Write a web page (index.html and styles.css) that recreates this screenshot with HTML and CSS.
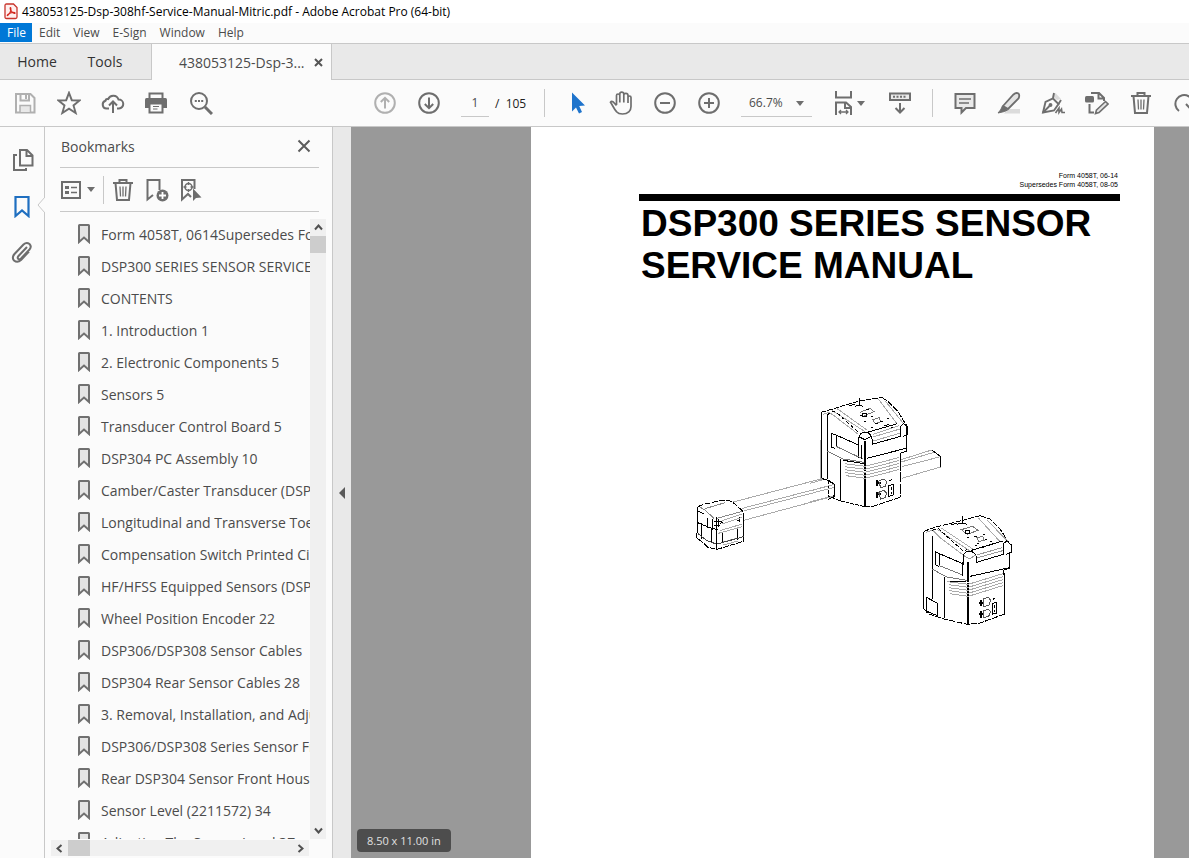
FILE: index.html
```html
<!DOCTYPE html>
<html lang="en">
<head>
    <meta charset="UTF-8">
    <meta name="viewport" content="width=device-width, initial-scale=1.0">
    <title>438053125-Dsp-308hf-Service-Manual-Mitric.pdf - Adobe Acrobat Pro (64-bit)</title>
    <link rel="stylesheet" href="styles.css">
</head>
<body>
    <!-- shared icons -->
    <svg class="symbols" aria-hidden="true">
        <symbol id="mark" viewBox="0 0 12 20">
            <path d="M1 1.500Q1 1 1.500 1H10.500Q11 1 11 1.500V18L6 13.500L1 18Z" fill="#e4e4e4" stroke="#707070" stroke-width="2"/>
        </symbol>
        <symbol id="trash" viewBox="0 0 24 24">
            <path d="M2 5H22M8.500 5V2H15.500V5M4.500 5L6 22H18L19.500 5" fill="none" stroke="#6e6e6e" stroke-width="2"/>
            <path d="M9 8.500L9.500 18.500M12 8.500V18.500M15 8.500L14.500 18.500" fill="none" stroke="#6e6e6e" stroke-width="1.300"/>
        </symbol>
    </svg>

    <header class="titlebar">
        <svg width="14" height="17" viewBox="0 0 14 17">
            <path d="M1 2.500Q1 1 2.500 1H9.500L13 4.500V14Q13 15.500 11.500 15.500H2.500Q1 15.500 1 14Z" fill="#fff0ef" stroke="#c8332b" stroke-width="1.300"/>
            <path d="M3.500 12.500C5.500 11.500 7.500 7 6.800 5C6.300 3.800 5.600 5.500 7 7.500C8.200 9.400 10 11 11 10.300C11.500 9 7 9.200 4.500 11C3.200 11.800 3 12.800 3.500 12.500Z" fill="none" stroke="#d3261d" stroke-width="1.200"/>
        </svg>
        <span>438053125-Dsp-308hf-Service-Manual-Mitric.pdf - Adobe Acrobat Pro (64-bit)</span>
    </header>

    <nav class="menubar">
        <button class="active">File</button>
        <button>Edit</button>
        <button>View</button>
        <button>E-Sign</button>
        <button>Window</button>
        <button>Help</button>
    </nav>

    <div class="tabs">
        <button class="tab home">Home</button>
        <button class="tab tools">Tools</button>
        <div class="doc-tab">
            <span>438053125-Dsp-3...</span>
            <button aria-label="Close tab">
                <svg width="9" height="9" viewBox="0 0 9 9"><path d="M1 1L8 8M8 1L1 8" stroke="#555" stroke-width="2"/></svg>
            </button>
        </div>
    </div>

    <div class="toolbar">
        <div class="group">
            <button class="tool" aria-label="Save">
                <svg class="icon" viewBox="0 0 24 24" fill="none" stroke="#b0b0b0" stroke-width="2">
                    <path d="M3 3H17.500L21.500 7V21.500H3Z"/><path d="M7.500 3V9.500H16V3M13 4V8"/><path d="M7 21V14.500H17.500V21" fill="#e8e8e8" stroke-width="1.500"/>
                </svg>
            </button>
            <button class="tool" aria-label="Star">
                <svg class="icon" viewBox="0 0 24 24" fill="none" stroke="#6e6e6e" stroke-width="1.900">
                    <path d="M12 1.800L14.800 9.200L22.600 9.500L16.500 14.400L18.700 22L12 17.600L5.300 22L7.500 14.400L1.400 9.500L9.200 9.200Z"/>
                </svg>
            </button>
            <button class="tool" aria-label="Upload">
                <svg class="icon" viewBox="0 0 24 24" fill="none" stroke="#6e6e6e" stroke-width="2">
                    <path d="M8 17.500H5.500A4 4 0 0 1 4.500 9.700Q5 7.500 7.200 8A5.500 5.500 0 0 1 17.500 8.500A4.500 4.500 0 0 1 18 17.500H16"/><path d="M12 22V11M8 14.500L12 10.500L16 14.500"/>
                </svg>
            </button>
            <button class="tool" aria-label="Print">
                <svg class="icon" viewBox="0 0 24 24" fill="none" stroke="#6e6e6e" stroke-width="2">
                    <path d="M4.500 7V2.500H17.500V7"/><path d="M0 8.500Q0 7 1.500 7H20.500Q22 7 22 8.500V17H0Z" fill="#6e6e6e" stroke="none"/><path d="M4.500 12.500H17.500V21.500H4.500Z" fill="#fbfbfb"/><path d="M8 15.500H14M8 18H12.500" stroke-width="1"/>
                </svg>
            </button>
            <button class="tool" aria-label="Search">
                <svg class="icon" viewBox="0 0 24 24" fill="none" stroke="#6e6e6e" stroke-width="2">
                    <circle cx="10" cy="10" r="8"/><path d="M16 16L23 23" stroke-width="3"/><path d="M5.800 10H7.800M9 10H11M12.200 10H14.200"/>
                </svg>
            </button>
        </div>

        <div class="group pages">
            <button class="tool" aria-label="Previous page">
                <svg class="icon" viewBox="0 0 24 24" fill="none" stroke="#b0b0b0" stroke-width="2"><circle cx="12" cy="12" r="9.800"/><path d="M12 17.500V7M7.800 11L12 6.800L16.200 11"/></svg>
            </button>
            <button class="tool" aria-label="Next page">
                <svg class="icon" viewBox="0 0 24 24" fill="none" stroke="#6e6e6e" stroke-width="2"><circle cx="12" cy="12" r="9.800"/><path d="M12 6.500V17M7.800 13L12 17.200L16.200 13"/></svg>
            </button>
            <input class="page-no" type="text" value="1" aria-label="Page">
            <span class="total">/&nbsp; 105</span>
        </div>

        <div class="group split">
            <button class="tool" aria-label="Select">
                <svg class="icon" viewBox="0 0 24 24"><path d="M7 1.500V20.500L11 16.500L14 22.500L17 21L14.200 15L20 14.500Z" fill="#1f74cc"/></svg>
            </button>
            <button class="tool" aria-label="Hand">
                <svg class="icon" viewBox="0 0 24 24" fill="none" stroke="#6e6e6e" stroke-width="1.700">
                    <path d="M7.500 14.500L4.200 11Q2.500 9.800 1.500 11.200C3.500 14 5 18 7.500 20.700Q9.500 23 13.500 23C19 23 22 20 22 15.500V6.500Q22 5 20.500 5Q19 5 19 6.500M7.500 14V4.500Q7.500 3 9 3Q10.800 3 10.800 4.500V11.500V3Q10.800 1.200 12.700 1.200Q14.800 1.200 14.800 3V11.500V4Q14.800 2.400 16.800 2.400Q19 2.400 19 4.500V12"/>
                </svg>
            </button>
            <button class="tool" aria-label="Zoom out">
                <svg class="icon" viewBox="0 0 24 24" fill="none" stroke="#6e6e6e" stroke-width="2"><circle cx="12" cy="12" r="9.800"/><path d="M7 12H17"/></svg>
            </button>
            <button class="tool" aria-label="Zoom in">
                <svg class="icon" viewBox="0 0 24 24" fill="none" stroke="#6e6e6e" stroke-width="2"><circle cx="12" cy="12" r="9.800"/><path d="M7 12H17M12 7V17"/></svg>
            </button>
            <label class="zoom">
                <select aria-label="Zoom level">
                    <option>66.7%</option>
                    <option>100%</option>
                </select>
            </label>
            <button class="tool fit" aria-label="Fit width">
                <svg class="icon" viewBox="0 0 24 24" fill="none" stroke="#6e6e6e" stroke-width="2">
                    <path d="M3 0V6.500H18V0M3 24V11.500H13L18 16V24M12 11.500V17H18"/><path d="M6 21H15M8 19L6 21L8 23M13 19L15 21L13 23" stroke-width="1.300"/>
                </svg>
                <span class="caret"></span>
            </button>
            <button class="tool scroll" aria-label="Scrolling">
                <svg class="icon" viewBox="0 0 24 24" fill="none" stroke="#6e6e6e" stroke-width="2">
                    <path d="M2 2.500H22V9H2Z" fill="#e9e9e9"/><path d="M5 5.800H7M8.500 5.800H10.500M12 5.800H14M15.500 5.800H17.500"/><path d="M12 12V21.500M7.500 17L12 21.500L16.500 17"/>
                </svg>
            </button>
        </div>

        <div class="group split">
            <button class="tool" aria-label="Comment">
                <svg class="icon" viewBox="0 0 24 24" fill="#e9e9e9" stroke="#6e6e6e" stroke-width="2">
                    <path d="M2.500 3H21.500V17H13L8.500 21.500V17H2.500Z"/><path d="M6 8H18M6 12H16" stroke-width="1.300"/>
                </svg>
            </button>
            <button class="tool" aria-label="Highlight">
                <svg class="icon" viewBox="0 0 24 24" fill="#e4e4e4" stroke="#6e6e6e" stroke-width="1.800">
                    <path d="M11 18H23V22.500H7Z" fill="#dcdcdc" stroke="none"/><path d="M6 15L16.500 3.500Q19 1.200 21.500 2.500Q23 4.500 21.500 7.500L11 18Z"/><path d="M5.500 15L10.500 19L7.500 20.500L1 22L3.500 19Z" fill="#6e6e6e" stroke-width="1"/>
                </svg>
            </button>
            <button class="tool" aria-label="Sign">
                <svg class="icon" viewBox="0 0 24 24" fill="none" stroke="#6e6e6e" stroke-width="1.900">
                    <path d="M14.500 2L20 8L16 9L11.500 5Z" fill="#dcdcdc" stroke="none"/><path d="M2 21.500L4.500 11L12 7.500L17.500 13L13 19.500Z"/><path d="M2 21.500L8.500 15M13 2L12 7M17.500 13L20 9"/><circle cx="9.500" cy="14" r="1"/><path d="M14.500 22L18 17V21.500L20.500 18L21 21.500H24" stroke-width="1.600"/>
                </svg>
            </button>
            <button class="tool" aria-label="Edit PDF">
                <svg class="icon" viewBox="0 0 24 24" fill="none" stroke="#6e6e6e" stroke-width="2">
                    <path d="M6 2H14L19 7V10M13.500 2V7.500H19M4.500 13V21.500H9"/><rect x="0" y="5" width="9" height="6.500" rx="1.500" fill="#6e6e6e" stroke="none"/><path d="M11.500 19L20.500 10.500L23 13L14 21.500L10.500 22.500Z" fill="#e4e4e4" stroke-width="1.600"/>
                </svg>
            </button>
            <button class="tool" aria-label="Delete"><svg class="icon"><use href="#trash"/></svg></button>
            <button class="tool" aria-label="Rotate">
                <svg class="icon" viewBox="0 0 24 24" fill="none" stroke="#6e6e6e" stroke-width="2"><path d="M6 20A8.800 8.800 0 1 1 19 17M13 13L18 18.500L23 13"/></svg>
            </button>
        </div>
    </div>

    <main class="workspace">
        <nav class="rail">
            <button aria-label="Page thumbnails">
                <svg class="icon" viewBox="0 0 24 24" fill="none" stroke="#6e6e6e" stroke-width="2">
                    <path d="M9 2H16L21.500 7.500V17.500H9ZM15.500 2V8H21.500M6 7H3V22H15V20"/>
                </svg>
            </button>
            <button class="current" aria-label="Bookmarks">
                <svg class="icon" viewBox="0 0 24 24"><path d="M4.500 3H17.500V22L11 16.500L4.500 22Z" fill="none" stroke="#1f6fc0" stroke-width="2.200"/></svg>
            </button>
            <button aria-label="Attachments">
                <svg class="icon" viewBox="0 0 24 24" fill="none" stroke="#6e6e6e" stroke-width="2">
                    <path d="M16 7L7.500 16Q6 17.800 7.300 19Q8.500 19.800 10 18.500L18.500 9.500Q21 6.500 18.500 4Q15.500 1.700 12.500 4.500L3.500 14Q0.500 17.500 3 20.500Q6.500 23.300 10 20L18 11.500"/>
                </svg>
            </button>
            <svg class="notch" width="8" height="16" viewBox="0 0 8 16"><path d="M8 0L1 8L8 16" fill="#fbfbfb" stroke="#c8c8c8"/></svg>
        </nav>

        <aside class="panel">
            <div class="panel-head">
                <h2>Bookmarks</h2>
                <button aria-label="Close panel">
                    <svg width="14" height="14" viewBox="0 0 14 14"><path d="M1.500 1.500L12.500 12.500M12.500 1.500L1.500 12.500" stroke="#5c5c5c" stroke-width="2"/></svg>
                </button>
            </div>
            <div class="panel-tools">
                <button class="options" aria-label="Options">
                    <svg width="20" height="18" viewBox="0 0 20 18" fill="none" stroke="#6e6e6e" stroke-width="2"><path d="M1 1H19V17H1Z"/><path d="M4 6.500H8M4 11.500H8" stroke-width="3"/><path d="M10 6.500H16M10 11.500H16" stroke-width="1.600"/></svg>
                    <span class="caret"></span>
                </button>
                <button class="first" aria-label="Delete bookmark"><svg class="icon"><use href="#trash"/></svg></button>
                <button aria-label="New bookmark">
                    <svg class="icon" viewBox="0 0 24 24"><path d="M8 17L2.500 21.500V2H14.500V12" fill="none" stroke="#6e6e6e" stroke-width="2"/><circle cx="17.500" cy="17.500" r="6" fill="#6e6e6e"/><path d="M14 17.500H21M17.500 14V21" stroke="#fff" stroke-width="1.800"/></svg>
                </button>
                <button aria-label="Find bookmark">
                    <svg class="icon" viewBox="0 0 24 24" fill="none" stroke="#6e6e6e" stroke-width="2"><path d="M15.500 11V2H3V21.500L9 16L12 19"/><circle cx="9.500" cy="9" r="3.500" stroke-width="1.500"/><path d="M9.500 4V7M9.500 11V14M4.500 9H7.500M11.500 9H14.500" stroke-width="1.300"/><path d="M14 10.500V23L17 20L22.500 19.500Z" fill="#6e6e6e" stroke="none"/></svg>
                </button>
            </div>
            <div class="list-area">
                <ul class="bookmarks">
                    <li><a href="#"><svg><use href="#mark"/></svg>Form 4058T, 0614Supersedes Form 4058T, 0805</a></li>
                    <li><a href="#"><svg><use href="#mark"/></svg>DSP300 SERIES SENSOR SERVICE MANUAL</a></li>
                    <li><a href="#"><svg><use href="#mark"/></svg>CONTENTS</a></li>
                    <li><a href="#"><svg><use href="#mark"/></svg>1. Introduction 1</a></li>
                    <li><a href="#"><svg><use href="#mark"/></svg>2. Electronic Components 5</a></li>
                    <li><a href="#"><svg><use href="#mark"/></svg>Sensors 5</a></li>
                    <li><a href="#"><svg><use href="#mark"/></svg>Transducer Control Board 5</a></li>
                    <li><a href="#"><svg><use href="#mark"/></svg>DSP304 PC Assembly 10</a></li>
                    <li><a href="#"><svg><use href="#mark"/></svg>Camber/Caster Transducer (DSP</a></li>
                    <li><a href="#"><svg><use href="#mark"/></svg>Longitudinal and Transverse Toe</a></li>
                    <li><a href="#"><svg><use href="#mark"/></svg>Compensation Switch Printed Circuit</a></li>
                    <li><a href="#"><svg><use href="#mark"/></svg>HF/HFSS Equipped Sensors (DSP</a></li>
                    <li><a href="#"><svg><use href="#mark"/></svg>Wheel Position Encoder 22</a></li>
                    <li><a href="#"><svg><use href="#mark"/></svg>DSP306/DSP308 Sensor Cables</a></li>
                    <li><a href="#"><svg><use href="#mark"/></svg>DSP304 Rear Sensor Cables 28</a></li>
                    <li><a href="#"><svg><use href="#mark"/></svg>3. Removal, Installation, and Adjustment</a></li>
                    <li><a href="#"><svg><use href="#mark"/></svg>DSP306/DSP308 Series Sensor Front</a></li>
                    <li><a href="#"><svg><use href="#mark"/></svg>Rear DSP304 Sensor Front Housing</a></li>
                    <li><a href="#"><svg><use href="#mark"/></svg>Sensor Level (2211572) 34</a></li>
                    <li><a href="#"><svg><use href="#mark"/></svg>Adjusting The Sensor Level 37</a></li>
                </ul>
                <div class="vscroll">
                    <button aria-label="Scroll up"><svg width="9" height="7" viewBox="0 0 9 7"><path d="M1 5.500L4.500 1.500L8 5.500" fill="none" stroke="#505050" stroke-width="2"/></svg></button>
                    <div class="thumb"></div>
                    <button aria-label="Scroll down"><svg width="9" height="7" viewBox="0 0 9 7"><path d="M1 1.500L4.500 5.500L8 1.500" fill="none" stroke="#505050" stroke-width="2"/></svg></button>
                </div>
            </div>
            <div class="hscroll">
                <button aria-label="Scroll left"><svg width="7" height="9" viewBox="0 0 7 9"><path d="M5.500 1L1.500 4.500L5.500 8" fill="none" stroke="#505050" stroke-width="2"/></svg></button>
                <div class="thumb"></div>
                <button aria-label="Scroll right"><svg width="7" height="9" viewBox="0 0 7 9"><path d="M1.500 1L5.500 4.500L1.500 8" fill="none" stroke="#505050" stroke-width="2"/></svg></button>
            </div>
        </aside>

        <button class="splitter" aria-label="Collapse panel">
            <svg width="6" height="12" viewBox="0 0 6 12"><path d="M6 0V12L0 6Z" fill="#5a5a5a"/></svg>
        </button>

        <section class="viewer">
            <article class="page">
                <p class="form-no">Form 4058T, 06-14<br>Supersedes Form 4058T, 08-05</p>
                <h1>DSP300 SERIES SENSOR SERVICE MANUAL</h1>
                <svg class="drawing" viewBox="0 0 1020 750" fill="none" stroke="#000" stroke-width="3" shape-rendering="crispEdges">
                    <!-- main sensor with its rail -->
                    <g transform="translate(360 0)">
                        <path d="M270 225L365 195M275 245L392 215M275 280L392 246M270 232L372 202M45 282L0 295M73 298L0 318M73 332L0 350" stroke="#aaa"/>
                        <path d="M365 195L392 215V246M45 282L73 298V332L64 336"/>
                        <path d="M33 85V280M52 90V282"/>
                        <path d="M33 82L75 70L100 62L150 48L215 37" stroke-dasharray="16 4"/>
                        <path d="M215 37L232 48L264 80L290 122" stroke-dasharray="18 4"/>
                        <path d="M38 88L58 82L72 92L145 148M66 76L165 140M80 70L172 136M205 42L262 118M226 48L284 120" stroke="#aaa"/>
                        <path d="M52 90L60 84L75 78L145 142" stroke-dasharray="10 8"/>
                        <path d="M146 182V158Q150 142 166 142Q184 144 186 162V180M148 156L165 164L184 154"/>
                        <path d="M188 148L268 122M188 156L270 132M190 168L272 144" stroke="#aaa"/>
                        <path d="M186 178L272 154M172 142L262 116M272 152V124L280 116L292 126V148L280 154"/>
                        <path d="M290 124V198L270 205V228"/>
                        <path d="M64 145V186L74 190M64 145L78 150V184M78 150L146 180V218"/>
                        <path d="M78 184L146 216L158 220M52 198L100 222L162 232" stroke="#777"/>
                        <path d="M154 180V222"/>
                        <path d="M165 168V362" stroke-width="6"/>
                        <path d="M160 244H171M160 258H171M160 270H171" stroke="#fff"/>
                        <path d="M92 222V348M100 226L162 236M170 220L288 190"/>
                        <path d="M270 228V335" stroke-dasharray="30 4"/>
                        <path d="M104 236L165 244L266 218M104 245L165 253L266 227M104 254L165 262L266 236M106 263L165 271L266 245M108 272L165 280L266 254" stroke="#aaa"/>
                        <path d="M55 284V334L92 348L160 364" stroke-dasharray="12 3"/>
                        <path d="M160 364L182 366L232 350L272 336" stroke-dasharray="20 4"/>
                        <path d="M148 64V40M136 64L146 60L160 64M118 62L134 58"/>
                        <path d="M150 82L180 70L192 80L162 92M188 104L208 98L212 110L196 116Z" stroke="#777"/>
                        <path d="M156 84H168V94H156ZM168 74H178M150 92H156M182 94H190M196 116H204M210 110H218M182 126H190M206 130H214M222 122H230M232 118H238M244 128H250M162 108H168M230 100H236"/>
                        <path d="M202 286V304M202 320V338M200 294H212M200 328H212" stroke-width="6"/>
                        <path d="M206 288L222 282L230 290L226 304L212 308ZM206 322L222 316L230 324L226 338L212 342Z" stroke="#555"/>
                        <path d="M236 302L250 298V330L236 334ZM238 288L246 284M243 306V314M243 320V326"/>
                    </g>
                    <!-- small sensor on the end of the rail -->
                    <g transform="translate(-15 165)">
                        <path d="M145 186L415 115M172 205L445 134M176 213L448 142M176 241L448 168" stroke="#aaa"/>
                        <path d="M412 116L432 122L448 133V170L430 178"/>
                        <path d="M407 0L408 116" stroke="#aaa"/>
                        <path d="M38 200L60 192L116 180L140 184L174 214V236" stroke-dasharray="18 4"/>
                        <path d="M44 200L62 212L88 236M60 206L120 188M92 236L172 214" stroke="#888"/>
                        <path d="M38 200V280M38 212L58 222M48 250V298M38 248L82 266L98 268"/>
                        <path d="M82 238V270M94 232V328M100 236V262M174 236V290M112 276V308M156 262V300M78 268V306M68 234V264"/>
                        <path d="M88 244H110M88 256H104M106 250L114 246M156 240H166M164 232V246"/>
                        <path d="M112 242L172 222M112 252L172 232M104 272L172 252M100 280L172 260M114 306L158 294M114 315L160 303" stroke="#aaa"/>
                        <path d="M34 280V292L58 312L68 322L96 328L176 304V290" stroke-dasharray="18 3"/>
                        <path d="M38 280L66 302L94 312M96 312L176 290" stroke="#444"/>
                    </g>
                    <!-- second sensor -->
                    <g transform="translate(660 360)">
                        <path d="M41 80V310M66 92V282"/>
                        <path d="M41 80L60 72L85 64L150 48L210 32" stroke-dasharray="16 4"/>
                        <path d="M210 32L240 42L270 72L296 112" stroke-dasharray="18 4"/>
                        <path d="M48 82L68 76L88 96L160 150M80 72L180 138M92 68L188 132M206 40L272 112M232 46L292 108" stroke="#aaa"/>
                        <path d="M66 76L84 70L160 138L172 134" stroke-dasharray="12 6"/>
                        <path d="M184 136L278 108M160 180V152Q164 138 180 138Q198 142 200 162V174"/>
                        <path d="M162 152L178 162L198 150M200 150L276 128M200 159L278 137" stroke="#999"/>
                        <path d="M200 172L280 148V116L290 108L304 120V142L288 148M298 148V190L280 196V210"/>
                        <path d="M75 140V178L86 184M75 140L88 146V182M88 146L158 176V212"/>
                        <path d="M88 182L158 210M66 192L110 216L170 226" stroke="#777"/>
                        <path d="M156 172V212"/>
                        <path d="M175 170V358" stroke-width="6"/>
                        <path d="M170 232H181" stroke="#fff"/>
                        <path d="M103 216V340M118 228L168 230M180 214L298 188M282 204V330"/>
                        <path d="M112 230L175 238L278 206M116 239L175 247L278 215M116 248L175 256L278 224M118 257L175 265L278 233M120 266L175 274L278 242" stroke="#aaa"/>
                        <path d="M48 276L66 286L82 294V332L48 318Z"/>
                        <path d="M41 310L54 326L102 342L172 358L210 354L282 328" stroke-dasharray="18 4"/>
                        <path d="M158 58V32M142 58L152 54L172 58M124 60L140 54"/>
                        <path d="M154 74L188 64L204 76L172 88ZM200 98L218 94L222 106L206 110Z" stroke="#777"/>
                        <path d="M166 76H178V86H166ZM170 98H176M192 94H200M202 114H208M220 88H226M194 122H200M226 104H232M240 110H246M216 126H222M232 120H240"/>
                        <path d="M212 286V304M212 318V338M208 294H220M208 328H220" stroke-width="6"/>
                        <path d="M220 282L234 276L242 286L236 302L222 304ZM220 318L234 312L242 320L236 334L222 338Z" stroke="#555"/>
                        <path d="M246 296L260 292V324L246 328ZM248 284L256 278M252 300V308M252 314V320"/>
                    </g>
                </svg>
            </article>
            <div class="page-size">8.50 x 11.00 in</div>
        </section>
    </main>
</body>
</html>
```

FILE: styles.css
```css
* {
    box-sizing: border-box;
}
body {
    margin: 0;
    height: 100vh;
    display: flex;
    flex-direction: column;
    overflow: hidden;
    background-color: #fbfbfb;
    color: #4b4b4b;
    font-family: "Open Sans", "Noto Sans", sans-serif;
    font-size: 12px;
}
button, input, select {
    font-family: inherit;
    font-size: inherit;
    color: inherit;
    background: none;
    border: none;
    padding: 0;
}
button {
    display: flex;
    align-items: center;
    justify-content: center;
}
.symbols {
    display: none;
}
.icon {
    width: 24px;
    height: 24px;
    flex: none;
}
.caret {
    border: 4px solid transparent;
    border-top: 5px solid #6e6e6e;
    border-bottom: none;
}

/* title and menu */
.titlebar {
    display: flex;
    align-items: center;
    gap: 4px;
    height: 23px;
    padding-left: 4px;
    background-color: #fff;
    color: #000;
    white-space: nowrap;
    flex: none;
}
.menubar {
    display: flex;
    height: 20px;
    padding-bottom: 1px;
    flex: none;
}
.menubar button {
    padding: 0 6px 0 7px;
}
.menubar .active {
    background-color: #0078d7;
    color: #fff;
}

/* tabs */
.tabs {
    display: flex;
    height: 37px;
    background-color: #e9e9e9;
    border-top: 1px solid #c8c8c8;
    border-bottom: 1px solid #c8c8c8;
    font-size: 14px;
    flex: none;
}
.tab {
    color: #333;
}
.home {
    width: 74px;
}
.tools {
    width: 62px;
}
.doc-tab {
    display: flex;
    align-items: center;
    justify-content: space-between;
    width: 181px;
    margin: 0 0 -1px 15px;
    padding: 0 8px 0 27px;
    background-color: #fbfbfb;
    border: 1px solid #c8c8c8;
    border-width: 0 1px;
}

/* toolbar */
.toolbar {
    display: flex;
    align-items: center;
    height: 47px;
    padding-left: 3px;
    border-bottom: 1px solid #c8c8c8;
    overflow: hidden;
    flex: none;
}
.group {
    display: flex;
    align-items: center;
    flex: none;
}
.tool {
    width: 44px;
    height: 44px;
    flex: none;
}
.pages {
    margin-left: 140px;
}
.page-no {
    width: 28px;
    height: 28px;
    margin-left: 10px;
    border-bottom: 1px solid #c8c8c8;
    text-align: center;
}
.total {
    width: 55px;
    padding-left: 6px;
    color: #222;
}
.split {
    position: relative;
    padding-left: 11px;
}
.split::before {
    content: "";
    position: absolute;
    left: 0;
    width: 1px;
    height: 28px;
    background-color: #c8c8c8;
}
.zoom {
    position: relative;
    margin-left: 10px;
    border-bottom: 1px solid #c8c8c8;
}
.zoom select {
    appearance: none;
    width: 71px;
    height: 27px;
    padding-left: 8px;
}
.zoom::after {
    content: "";
    position: absolute;
    right: 8px;
    top: 12px;
    border: 4px solid transparent;
    border-top: 5px solid #6e6e6e;
    border-bottom: none;
}
.fit {
    margin-left: 15px;
}
.scroll {
    margin: 0 10px 0 7px;
}

/* workspace */
.workspace {
    display: flex;
    flex: 1;
    min-height: 0;
}
.rail {
    position: relative;
    display: flex;
    flex-direction: column;
    align-items: center;
    gap: 22px;
    width: 45px;
    padding: 21px 0 0 2px;
    border-right: 1px solid #c8c8c8;
    flex: none;
}
.notch {
    position: absolute;
    right: -1px;
    top: 70px;
}
.panel {
    display: flex;
    flex-direction: column;
    width: 288px;
    border-right: 1px solid #c8c8c8;
    flex: none;
}
.panel-head {
    display: flex;
    align-items: center;
    justify-content: space-between;
    height: 41px;
    margin: 0 13px 0 15px;
    padding: 0 8px 2px 1px;
    border-bottom: 1px solid #c8c8c8;
    flex: none;
}
.panel-head h2 {
    margin: 0;
    font-size: 14px;
    font-weight: normal;
}
.panel-tools {
    display: flex;
    align-items: center;
    gap: 10px;
    height: 44px;
    margin: 0 13px 0 15px;
    border-bottom: 1px solid #c8c8c8;
    flex: none;
}
.options {
    gap: 6px;
    height: 28px;
    padding: 0 8px 0 1px;
    border-right: 1px solid #c8c8c8;
}
.first {
    margin-left: -3px;
}
.list-area {
    display: flex;
    flex: 1;
    min-height: 0;
    margin: 7px 6px 0 6px;
}
.bookmarks {
    flex: 1;
    margin: 0;
    padding: 0 0 0 27px;
    list-style: none;
    overflow: hidden;
}
.bookmarks a {
    display: flex;
    align-items: center;
    gap: 11px;
    height: 32px;
    padding-bottom: 2px;
    color: #4b4b4b;
    font-size: 14px;
    text-decoration: none;
    white-space: nowrap;
}
.bookmarks svg {
    width: 12px;
    height: 20px;
    flex: none;
}
.vscroll {
    display: flex;
    flex-direction: column;
    width: 16px;
    background-color: #f0f0f0;
}
.vscroll button {
    height: 17px;
}
.vscroll .thumb {
    height: 17px;
    margin-bottom: auto;
    background-color: #cdcdcd;
}
.hscroll {
    display: flex;
    height: 16px;
    margin: 1px 23px 2px 6px;
    background-color: #f0f0f0;
    flex: none;
}
.hscroll button {
    width: 17px;
}
.hscroll .thumb {
    width: 22px;
    margin-right: auto;
    background-color: #cdcdcd;
}
.splitter {
    width: 18px;
    background-color: #e9e9e9;
    flex: none;
}

/* document */
.viewer {
    position: relative;
    display: flex;
    justify-content: flex-end;
    flex: 1;
    padding-right: 35px;
    background-color: #999;
    overflow: hidden;
}
.page {
    width: 623px;
    padding: 44px 34px 0 108px;
    background-color: #fff;
    color: #000;
    font-family: "Liberation Sans", Arial, sans-serif;
    flex: none;
}
.form-no {
    margin: 0;
    padding: 0 2px 5px 0;
    border-bottom: 7px solid #000;
    font-size: 7px;
    line-height: 9px;
    text-align: right;
}
.page h1 {
    margin: 2px 0 98px 2px;
    font-size: 37px;
    line-height: 42px;
}
.drawing {
    display: block;
    width: 340px;
    height: 250px;
    margin-left: 51px;
}
.page-size {
    position: absolute;
    left: 6px;
    bottom: 6px;
    padding: 4px 10px;
    border-radius: 4px;
    background-color: #4d4d4d;
    color: #e0e0e0;
    font-size: 11px;
    line-height: 15px;
}
```
